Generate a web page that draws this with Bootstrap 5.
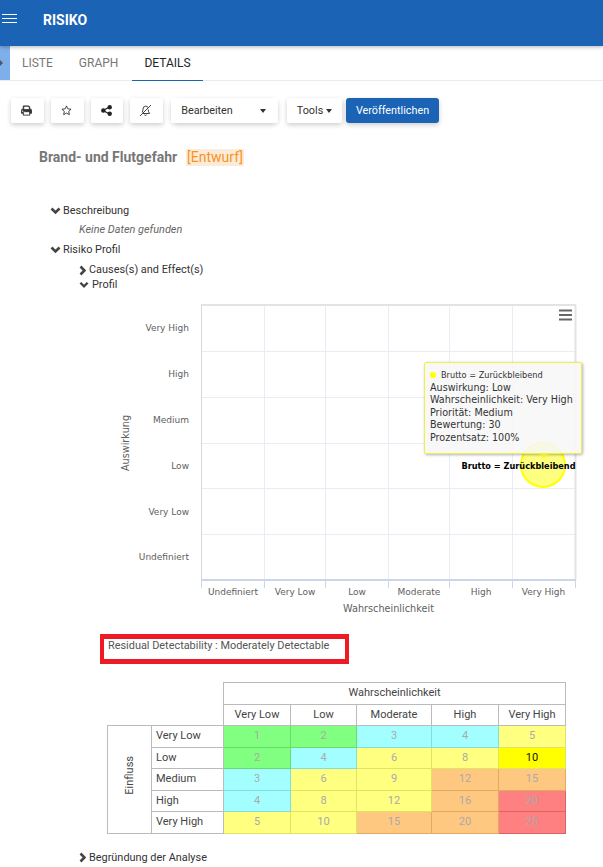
<!DOCTYPE html>
<html lang="de">
<head>
<meta charset="utf-8">
<title>Risiko</title>
<link rel="stylesheet" href="https://cdn.jsdelivr.net/npm/bootstrap@5.3.0/dist/css/bootstrap.min.css">
<style>
html,body{overflow:hidden;height:867px}
body{font-family:Roboto,"Liberation Sans",sans-serif;font-size:10.9px;color:#333;background:#fff}
.app-head{height:46px;background:#1a63b5;box-shadow:0 1px 4px rgba(0,0,0,.3);position:relative;z-index:2}
.app-burger{width:15px;margin-left:2px;margin-right:26px;margin-top:-10px}
.app-title{font-size:14px;font-weight:700;color:#fff;line-height:1;margin-top:-7px}
.tab-bar{height:35px;border-bottom:1px solid #e9ecef}
.side-strip{width:10px;height:34px;background:#7db0ea}
.tab-bar .nav-link{font-size:12px;line-height:14px;padding:10px 12px 9px;color:#777;height:35px;border-bottom:1px solid transparent}
.tab-bar .nav-link.first{padding-left:12px;padding-right:26px}
.tab-bar .nav-link.second{padding-left:0;padding-right:14px}
.tab-bar .nav-link.active{color:#212529;border-bottom-color:#1a63b5;padding-left:12px;padding-right:12px}
.tool-row{padding:17px 0 0 11px;gap:7px}
.tool-btn{--bs-btn-font-size:10.8px;--bs-btn-padding-y:0;--bs-btn-padding-x:0;--bs-btn-bg:#fff;--bs-btn-color:#333;--bs-btn-border-color:#fff;--bs-btn-border-radius:2px;height:25px;line-height:25px;border-width:0;box-shadow:0 2px 5px rgba(0,0,0,.2);display:flex;align-items:center;justify-content:center}
.tool-icon{width:33px;padding-right:2px}
.tool-split{box-shadow:0 2px 5px rgba(0,0,0,.2);height:25px;margin-left:1px}
.tool-split .tool-btn{box-shadow:none}
.btn.tool-edit{width:77px;border-right:1px solid #ddd;padding-right:4px}
.tool-caret{width:31px}
.tool-menu{width:55px;margin-left:2px}
.tool-pub{--bs-btn-bg:#1a63b5;--bs-btn-color:#fff;--bs-btn-border-color:#1a63b5;width:93px;margin-left:-3px;border-radius:3px}
.dropdown-toggle::after{margin-left:3px;border-top-width:4px;border-right-width:3px;border-left-width:3px;vertical-align:2px}
.page-title{margin:25px 0 0 39px;font-size:14px;line-height:18px;font-weight:700;color:#777;display:flex;align-items:center}
.draft-tag{margin-left:9px;font-weight:400;font-size:14px;color:#f7941d;background:#fdebd9;padding:0 1px;line-height:17px}
.tree-row{display:flex;align-items:center;color:#333;line-height:14px}
.tree-row svg{flex:none}
.tree-1{margin:38px 0 0 50px;gap:2px}
.tree-note{margin:5px 0 0 79px;font-style:italic;color:#666;line-height:14px}
.tree-2{margin:6px 0 0 50px;gap:2px}
.tree-3{margin:6px 0 0 79px;gap:3px}
.tree-4{margin:1px 0 0 79px;gap:3px}
.chart-box{position:relative;height:327px;margin-top:8px}
.chart-box svg{display:block}
.ax{font-family:"DejaVu Sans",sans-serif;font-size:9px;fill:#606060}
.ax-title{font-family:"DejaVu Sans",sans-serif;font-size:9.7px;fill:#606060}
.bub-label{font-family:"DejaVu Sans Condensed","DejaVu Sans",sans-serif;font-size:9.1px;font-weight:700;fill:#000}
.chart-tip{position:absolute;left:424px;top:62px;width:158px;height:92px;background:rgba(247,247,247,.88);border:1px solid #f0f040;border-radius:2px;box-shadow:1px 1px 3px rgba(0,0,0,.3);padding:6px 5px 0;font-family:"DejaVu Sans",sans-serif;font-size:9.6px;line-height:12.6px;color:#333;white-space:nowrap}
.chart-tip .dot{display:inline-block;width:6px;height:6px;border-radius:50%;background:#ff0;margin-right:5px;vertical-align:0}
.chart-tip .tip-first{font-family:"DejaVu Sans Condensed","DejaVu Sans",sans-serif;font-size:9.1px}
.tip-arrow{position:absolute;left:114px;bottom:-6px;width:0;height:0;border:5px solid transparent;border-bottom:0;border-top:5px solid rgba(247,247,40,.7)}
.detect-box{margin:7px 0 0 100px;width:249px;height:30px;border:4px solid #ed1c24;border-bottom-width:5px;border-top-width:5px;padding:0 0 0 4px;line-height:13px;color:#555}
.risk-table{width:458px;margin:18px 0 0 107px;table-layout:fixed;border-collapse:collapse;font-size:11px;--bs-table-bg:transparent;margin-bottom:0}
.risk-table td,.risk-table th{border:1px solid #bbb;padding:0;height:21.5px;line-height:20px;font-weight:400;vertical-align:middle;color:#444}
.risk-table .blank{border:0}
.risk-table .lbl{padding-left:4px}
.risk-table .num{text-align:center;color:#aaa}
.risk-table .c-g{background:#80ff80;border-color:#6bdc6b}
.risk-table .c-b{background:#a3ffff;border-color:#85dcdc}
.risk-table .c-y{background:#ffff80;border-color:#e2e265}
.risk-table .c-o{background:#ffc880;border-color:#e0aa60}
.risk-table .c-r{background:#ff8080;border-color:#de6262}
.risk-table .c-now{background:#ff0;border-color:#e2e265;color:#111}
.vert-label{writing-mode:vertical-rl;transform:rotate(180deg);display:inline-block;line-height:14px}
.tree-5{margin:17px 0 0 79px;gap:3px}
</style>
</head>
<body>
<header class="app-head d-flex align-items-center">
  <svg class="app-burger" height="9" viewBox="0 0 15 9" aria-hidden="true"><path d="M0 .5h15M0 4.5h15M0 8.5h15" stroke="#fff" stroke-width="1"/></svg>
  <div class="app-title">RISIKO</div>
</header>
<div class="tab-bar d-flex">
  <div class="side-strip d-flex align-items-center"><svg width="4" height="6" viewBox="0 0 4 6" aria-hidden="true"><path d="M0 0l3 3-3 3z" fill="#555"/></svg></div>
  <ul class="nav">
    <li class="nav-item"><a class="nav-link first" href="#">LISTE</a></li>
    <li class="nav-item"><a class="nav-link second" href="#">GRAPH</a></li>
    <li class="nav-item"><a class="nav-link active" href="#">DETAILS</a></li>
  </ul>
</div>
<div class="tool-row d-flex">
  <button class="btn tool-btn tool-icon" type="button" aria-label="Drucken"><svg width="11" height="11" viewBox="0 0 12 11"><path d="M2.5 4V.5h6L9.5 1.5V4M.5 5.2Q.5 4 1.7 4h8.6q1.2 0 1.2 1.2V8.5H9.5M2.5 8.5H.5V5.2" fill="#333" stroke="#333"/><rect x="2.5" y="6.8" width="7" height="3.7" fill="#fff" stroke="#333"/><rect x="3.5" y="1.4" width="5" height="2.6" fill="#fff"/></svg></button>
  <button class="btn tool-btn tool-icon" type="button" aria-label="Favorit"><svg width="11" height="11" viewBox="0 0 12 12"><path d="M6 1l1.5 3.2 3.5.4-2.6 2.4.7 3.5L6 8.8l-3.1 1.7.7-3.5L1 4.6l3.5-.4z" fill="none" stroke="#333"/></svg></button>
  <button class="btn tool-btn tool-icon" style="width:32px" type="button" aria-label="Teilen"><svg width="11" height="11" viewBox="0 0 11 11"><path d="M2 5.5L8.5 2M2 5.5L8.5 9" stroke="#222" stroke-width="1.4"/><circle cx="2.3" cy="5.5" r="2.2" fill="#222"/><circle cx="8.7" cy="2.3" r="2.2" fill="#222"/><circle cx="8.7" cy="8.7" r="2.2" fill="#222"/></svg></button>
  <button class="btn tool-btn tool-icon" type="button" aria-label="Benachrichtigung aus"><svg width="13" height="13" viewBox="0 0 13 13"><path d="M3.2 8.5Q4 7 4 5 4 2.5 6.5 2.2 8.3 2.2 9 3.4M9.2 5.5Q9.3 8 10.6 9.5H3.6M5.3 10.8q1.2 1.2 2.4 0" fill="none" stroke="#444"/><path d="M1 12L12 1" stroke="#444"/></svg></button>
  <div class="btn-group tool-split">
    <button class="btn tool-btn tool-edit" type="button">Bearbeiten</button>
    <button class="btn tool-btn tool-caret dropdown-toggle" type="button" aria-label="Mehr"></button>
  </div>
  <button class="btn tool-btn tool-menu dropdown-toggle" type="button">Tools</button>
  <button class="btn tool-btn tool-pub" type="button">Veröffentlichen</button>
</div>
<div class="page-title"><span>Brand- und Flutgefahr</span><span class="draft-tag">[Entwurf]</span></div>

<div class="tree-row tree-1"><svg width="11" height="8" viewBox="0 0 11 8"><path d="M1.5 1.5l4 4 4-4" fill="none" stroke="#444" stroke-width="2.6"/></svg><span>Beschreibung</span></div>
<div class="tree-note">Keine Daten gefunden</div>
<div class="tree-row tree-2"><svg width="11" height="8" viewBox="0 0 11 8"><path d="M1.5 1.5l4 4 4-4" fill="none" stroke="#444" stroke-width="2.6"/></svg><span>Risiko Profil</span></div>
<div class="tree-row tree-3"><svg width="7" height="11" viewBox="0 0 7 11"><path d="M1.5 1.5l4 4-4 4" fill="none" stroke="#444" stroke-width="2.6"/></svg><span>Causes(s) and Effect(s)</span></div>
<div class="tree-row tree-4"><svg width="10" height="8" viewBox="0 0 11 8"><path d="M1.5 1.5l4 4 4-4" fill="none" stroke="#444" stroke-width="2.6"/></svg><span>Profil</span></div>

<div class="chart-box">
  <svg width="603" height="327" viewBox="0 300 603 327" role="img" aria-label="Risikodiagramm">
    <g fill="none" stroke="#e9ecf2" stroke-width="1">
      <path d="M264.5 305V580M325.5 305V580M388.5 305V580M449.5 305V580M512.5 305V580"/>
      <path d="M201 351.5H575M201 397.5H575M201 443.5H575M201 488.5H575M201 534.5H575"/>
    </g>
    <path d="M201 305H576M575.5 305V580" stroke="#e3e3e3" stroke-width="2" fill="none"/>
    <path d="M201.5 305V580" stroke="#d5d8df" stroke-width="1" fill="none"/>
    <path d="M201 580H576" stroke="#ccd6eb" stroke-width="2" fill="none"/>
    <path d="M201.5 580v8M264.5 580v8M325.5 580v8M388.5 580v8M449.5 580v8M512.5 580v8M575.5 580v8" stroke="#ccd6eb" stroke-width="1" fill="none"/>
    <path d="M559 310.5h13M559 315h13M559 319.5h13" stroke="#666" stroke-width="2.2" fill="none"/>
    <g class="ax" text-anchor="end">
      <text x="189" y="331">Very High</text>
      <text x="189" y="377">High</text>
      <text x="189" y="423">Medium</text>
      <text x="189" y="469">Low</text>
      <text x="189" y="515">Very Low</text>
      <text x="189" y="560">Undefiniert</text>
    </g>
    <g class="ax" text-anchor="middle">
      <text x="233" y="595">Undefiniert</text>
      <text x="295" y="595">Very Low</text>
      <text x="357" y="595">Low</text>
      <text x="419" y="595">Moderate</text>
      <text x="481" y="595">High</text>
      <text x="543.5" y="595">Very High</text>
    </g>
    <text class="ax-title" x="388.5" y="612" text-anchor="middle">Wahrscheinlichkeit</text>
    <text class="ax-title" x="0" y="0" text-anchor="middle" transform="translate(129 443) rotate(-90)">Auswirkung</text>
    <circle cx="543" cy="465" r="22" fill="#ffff00" fill-opacity=".5" stroke="#ffff00" stroke-width="2"/>
    <text class="bub-label" x="518.5" y="469" text-anchor="middle">Brutto = Zurückbleibend</text>
  </svg>
  <div class="chart-tip">
    <div class="tip-first"><span class="dot"></span>Brutto = Zurückbleibend</div>
    <div>Auswirkung: Low</div>
    <div>Wahrscheinlichkeit: Very High</div>
    <div>Priorität: Medium</div>
    <div>Bewertung: 30</div>
    <div>Prozentsatz: 100%</div>
    <span class="tip-arrow"></span>
  </div>
</div>

<div class="detect-box">Residual Detectability : Moderately Detectable</div>

<table class="table risk-table">
  <colgroup><col style="width:44px"><col style="width:72px"><col style="width:67px"><col style="width:66px"><col style="width:75px"><col style="width:67px"><col style="width:67px"></colgroup>
  <tr><th class="blank" colspan="2" rowspan="2"></th><th class="text-center" colspan="5">Wahrscheinlichkeit</th></tr>
  <tr><th class="text-center">Very Low</th><th class="text-center">Low</th><th class="text-center">Moderate</th><th class="text-center">High</th><th class="text-center">Very High</th></tr>
  <tr><th class="text-center" rowspan="5"><span class="vert-label">Einfluss</span></th><td class="lbl">Very Low</td><td class="num c-g">1</td><td class="num c-g">2</td><td class="num c-b">3</td><td class="num c-b">4</td><td class="num c-y">5</td></tr>
  <tr><td class="lbl">Low</td><td class="num c-g">2</td><td class="num c-b">4</td><td class="num c-y">6</td><td class="num c-y">8</td><td class="num c-now">10</td></tr>
  <tr><td class="lbl">Medium</td><td class="num c-b">3</td><td class="num c-y">6</td><td class="num c-y">9</td><td class="num c-o">12</td><td class="num c-o">15</td></tr>
  <tr><td class="lbl">High</td><td class="num c-b">4</td><td class="num c-y">8</td><td class="num c-y">12</td><td class="num c-o">16</td><td class="num c-r">20</td></tr>
  <tr><td class="lbl">Very High</td><td class="num c-y">5</td><td class="num c-y">10</td><td class="num c-o">15</td><td class="num c-o">20</td><td class="num c-r">25</td></tr>
</table>
<div class="tree-row tree-5"><svg width="7" height="11" viewBox="0 0 7 11"><path d="M1.5 1.5l4 4-4 4" fill="none" stroke="#444" stroke-width="2.6"/></svg><span>Begründung der Analyse</span></div>
<script src="https://cdn.jsdelivr.net/npm/bootstrap@5.3.0/dist/js/bootstrap.bundle.min.js"></script>
</body>
</html>
